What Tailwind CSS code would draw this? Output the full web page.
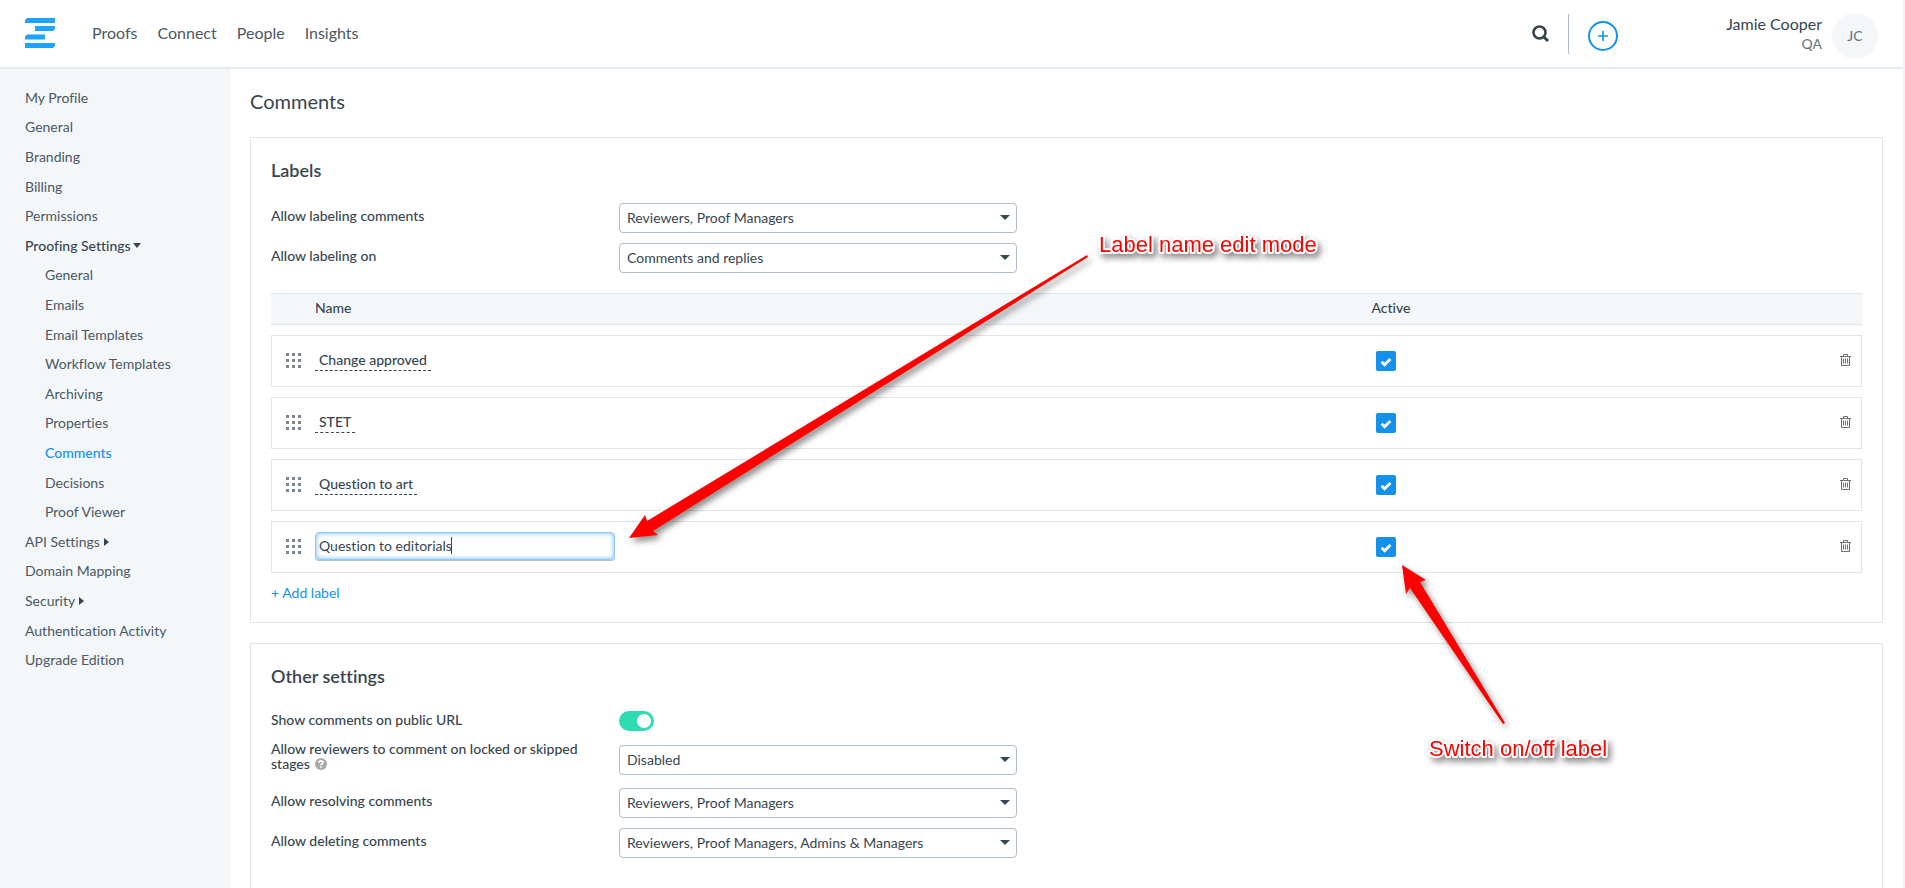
<!DOCTYPE html>
<html lang="en">

<head>
  <meta charset="UTF-8">
  <meta name="viewport" content="width=device-width, initial-scale=1.0">
  <title>Settings - Comments</title>

  <!-- Tailwind CSS -->
  <script src="https://cdn.jsdelivr.net/npm/@tailwindcss/browser@4"></script>
</head>

<body class="relative flex flex-col h-screen overflow-hidden bg-white border-r-2 border-[#f1f1f1] font-['Lato','Noto_Sans',sans-serif] [font-variant-ligatures:none] text-sm text-[#37454f]">

  <!-- Shared icons -->
  <svg class="hidden">
    <symbol id="icon-drag" viewBox="0 0 15 15">
      <path fill="currentColor" d="M0 0h3v3H0zM6 0h3v3H6zM12 0h3v3h-3zM0 6h3v3H0zM6 6h3v3H6zM12 6h3v3h-3zM0 12h3v3H0zM6 12h3v3H6zM12 12h3v3h-3z" />
    </symbol>
    <symbol id="icon-check" viewBox="0 0 12 10">
      <path fill="none" stroke="currentColor" stroke-width="2.8" d="M1.6 4.8l3 3L10.4 2" />
    </symbol>
    <symbol id="icon-trash" viewBox="0 0 11 12">
      <path fill="none" stroke="currentColor" d="M0 2.5h11M3.5 2.5v-2h4v2M1.5 2.5v9h8v-9M3.5 4.5v5M5.5 4.5v5M7.5 4.5v5" />
    </symbol>
    <symbol id="icon-caret" viewBox="0 0 10 5">
      <path fill="currentColor" d="M0 0h10L5 5z" />
    </symbol>
  </svg>

  <!-- Header begin -->
  <header class="flex shrink-0 items-center h-[69px] border-b-2 border-[#e1ebf2] px-[25px]">
    <a href="#" aria-label="Home" class="block mb-0.5">
      <svg class="w-[30px] h-[30px]" viewBox="0 0 30 30" fill="#1ea4ff">
        <path d="M2 0h28v5H0V2zM10 8h20v3l-2 2H10zM2 16.500h18v5H0v-3zM0 25h30v3l-2 2H0z" />
      </svg>
    </a>
    <nav class="flex gap-5 ml-[37px] mb-0.5 text-base text-[#4b5862]">
      <a href="#">Proofs</a>
      <a href="#">Connect</a>
      <a href="#">People</a>
      <a href="#">Insights</a>
    </nav>
    <div class="flex items-center ml-auto">
      <button type="button" aria-label="Search">
        <svg class="w-[17px] h-[17px]" viewBox="0 0 17 17" fill="none" stroke="#37454f">
          <circle cx="7.500" cy="7.500" r="6" stroke-width="2.600" />
          <path d="M11.500 11.500l4.500 4.500" stroke-width="3" />
        </svg>
      </button>
      <span class="w-px h-10 ml-[19px] bg-[#aebdc9]"></span>
      <button type="button" aria-label="Create" class="mt-1 ml-[19px]">
        <svg class="w-[30px] h-[30px]" viewBox="0 0 30 30" fill="none" stroke="#1491ea" stroke-width="2">
          <circle cx="15" cy="15" r="14" />
          <path d="M10 15h10M15 10v10" stroke-width="1.600" />
        </svg>
      </button>
      <div class="w-[100px] ml-[104px] text-right leading-5">
        <div class="text-base leading-5">Jamie Cooper</div>
        <div class="text-[#65717b]">QA</div>
      </div>
      <span class="flex items-center justify-center w-[46px] h-[46px] mt-1 ml-[10px] rounded-full bg-[#f3f7fa] text-[#65717b]">JC</span>
    </div>
  </header>
  <!-- Header End -->

  <div class="flex flex-1 min-h-0">

    <!-- Sidebar begin -->
    <aside class="w-[230px] shrink-0 bg-[#f3f7fa] pt-[14px] text-[#4b5862]">
      <ul class="grid auto-rows-fr items-center h-[592px] pl-[25px]">
        <li><a href="#">My Profile</a></li>
        <li><a href="#">General</a></li>
        <li><a href="#">Branding</a></li>
        <li><a href="#">Billing</a></li>
        <li><a href="#">Permissions</a></li>
        <li><a href="#" class="flex items-center gap-0.5 font-medium text-[#37454f]">Proofing Settings
            <svg class="w-2 h-[5px]" viewBox="0 0 8 5"><path fill="#37454f" d="M0 0h8L4 5z" /></svg></a></li>
        <li class="pl-5"><a href="#">General</a></li>
        <li class="pl-5"><a href="#">Emails</a></li>
        <li class="pl-5"><a href="#">Email Templates</a></li>
        <li class="pl-5"><a href="#">Workflow Templates</a></li>
        <li class="pl-5"><a href="#">Archiving</a></li>
        <li class="pl-5"><a href="#">Properties</a></li>
        <li class="pl-5"><a href="#" class="font-medium text-[#1491ea]">Comments</a></li>
        <li class="pl-5"><a href="#">Decisions</a></li>
        <li class="pl-5"><a href="#">Proof Viewer</a></li>
        <li><a href="#" class="flex items-center gap-1">API Settings
            <svg class="w-[5px] h-2" viewBox="0 0 5 8"><path fill="#37454f" d="M0 0l5 4-5 4z" /></svg></a></li>
        <li><a href="#">Domain Mapping</a></li>
        <li><a href="#" class="flex items-center gap-1">Security
            <svg class="w-[5px] h-2" viewBox="0 0 5 8"><path fill="#37454f" d="M0 0l5 4-5 4z" /></svg></a></li>
        <li><a href="#">Authentication Activity</a></li>
        <li><a href="#">Upgrade Edition</a></li>
      </ul>
    </aside>
    <!-- Sidebar End -->

    <!-- Content Begin -->
    <main class="flex-1 min-w-0 px-5 pt-5 overflow-hidden">
      <h1 class="text-xl leading-6 mb-6">Comments</h1>

      <!-- Labels -->
      <section class="border border-[#dee5eb] p-5">
        <h2 class="text-lg leading-6 font-semibold mb-[21px]">Labels</h2>

        <div class="grid grid-cols-[348px_398px] items-start mb-[10px]">
          <label for="labeling" class="pt-[5px] leading-[15px] font-medium">Allow labeling comments</label>
          <div class="relative">
            <select id="labeling" class="appearance-none block w-full h-[30px] border border-[#aebdc9] rounded bg-white px-[7px]">
              <option>Reviewers, Proof Managers</option>
            </select>
            <svg class="absolute right-[7px] top-3 w-[10px] h-[5px] pointer-events-none"><use href="#icon-caret" /></svg>
          </div>
        </div>
        <div class="grid grid-cols-[348px_398px] items-start mb-[10px]">
          <label for="labeling_on" class="pt-[5px] leading-[15px] font-medium">Allow labeling on</label>
          <div class="relative">
            <select id="labeling_on" class="appearance-none block w-full h-[30px] border border-[#aebdc9] rounded bg-white px-[7px]">
              <option>Comments and replies</option>
            </select>
            <svg class="absolute right-[7px] top-3 w-[10px] h-[5px] pointer-events-none"><use href="#icon-caret" /></svg>
          </div>
        </div>

        <table class="w-full table-fixed border-separate border-spacing-x-0 border-spacing-y-[10px]">
          <thead>
            <tr class="h-8 text-left">
              <th class="w-11 p-0 bg-[#f3f7fa] border-y border-[#dee5eb]"></th>
              <th class="p-0 pb-0.5 bg-[#f3f7fa] border-y border-[#dee5eb] font-medium">Name</th>
              <th class="w-[27%] p-0 pb-0.5 pl-px bg-[#f3f7fa] border-y border-[#dee5eb] font-medium">Active</th>
              <th class="w-[62px] p-0 bg-[#f3f7fa] border-y border-[#dee5eb]"></th>
            </tr>
          </thead>
          <tbody>
            <tr class="h-[52px]">
              <td class="p-0 pb-0.5 pl-[14px] border-y border-l border-[#dee5eb] text-[#7b8790]"><svg class="w-[15px] h-[15px]"><use href="#icon-drag" /></svg></td>
              <td class="p-0 pb-0.5 border-y border-[#dee5eb]"><a href="#" class="inline-block px-1 border-b border-dashed border-[#37454f] font-medium">Change approved</a></td>
              <td class="p-0 pl-[6px] border-y border-[#dee5eb]">
                <div class="relative w-5 h-5">
                  <input type="checkbox" checked aria-label="Change approved active" class="appearance-none block w-5 h-5 rounded-xs bg-[#1491ea]">
                  <svg class="absolute left-1 top-[6px] w-3 h-[10px] text-white pointer-events-none"><use href="#icon-check" /></svg>
                </div>
              </td>
              <td class="p-0 pb-0.5 pr-[10px] border-y border-r border-[#dee5eb]"><button type="button" aria-label="Delete" class="block ml-auto text-[#65717b]"><svg class="w-[11px] h-3"><use href="#icon-trash" /></svg></button></td>
            </tr>
            <tr class="h-[52px]">
              <td class="p-0 pb-0.5 pl-[14px] border-y border-l border-[#dee5eb] text-[#7b8790]"><svg class="w-[15px] h-[15px]"><use href="#icon-drag" /></svg></td>
              <td class="p-0 pb-0.5 border-y border-[#dee5eb]"><a href="#" class="inline-block px-1 border-b border-dashed border-[#37454f] font-medium">STET</a></td>
              <td class="p-0 pl-[6px] border-y border-[#dee5eb]">
                <div class="relative w-5 h-5">
                  <input type="checkbox" checked aria-label="STET active" class="appearance-none block w-5 h-5 rounded-xs bg-[#1491ea]">
                  <svg class="absolute left-1 top-[6px] w-3 h-[10px] text-white pointer-events-none"><use href="#icon-check" /></svg>
                </div>
              </td>
              <td class="p-0 pb-0.5 pr-[10px] border-y border-r border-[#dee5eb]"><button type="button" aria-label="Delete" class="block ml-auto text-[#65717b]"><svg class="w-[11px] h-3"><use href="#icon-trash" /></svg></button></td>
            </tr>
            <tr class="h-[52px]">
              <td class="p-0 pb-0.5 pl-[14px] border-y border-l border-[#dee5eb] text-[#7b8790]"><svg class="w-[15px] h-[15px]"><use href="#icon-drag" /></svg></td>
              <td class="p-0 pb-0.5 border-y border-[#dee5eb]"><a href="#" class="inline-block px-1 border-b border-dashed border-[#37454f] font-medium">Question to art</a></td>
              <td class="p-0 pl-[6px] border-y border-[#dee5eb]">
                <div class="relative w-5 h-5">
                  <input type="checkbox" checked aria-label="Question to art active" class="appearance-none block w-5 h-5 rounded-xs bg-[#1491ea]">
                  <svg class="absolute left-1 top-[6px] w-3 h-[10px] text-white pointer-events-none"><use href="#icon-check" /></svg>
                </div>
              </td>
              <td class="p-0 pb-0.5 pr-[10px] border-y border-r border-[#dee5eb]"><button type="button" aria-label="Delete" class="block ml-auto text-[#65717b]"><svg class="w-[11px] h-3"><use href="#icon-trash" /></svg></button></td>
            </tr>
            <tr class="h-[52px]">
              <td class="p-0 pb-0.5 pl-[14px] border-y border-l border-[#dee5eb] text-[#7b8790]"><svg class="w-[15px] h-[15px]"><use href="#icon-drag" /></svg></td>
              <td class="p-0 pb-0.5 border-y border-[#dee5eb]">
                <div class="relative w-[300px]">
                  <input type="text" value="Question to editorials" aria-label="Label name" class="block w-full h-7 px-[3px] pb-px border border-[#8dcaf5] rounded shadow-[inset_0_0_5px_#66b8f5,0_1px_0_#b5bfc7] outline-none">
                  <span class="absolute left-[136px] top-[5px] w-px h-[17px] bg-[#37454f]"></span>
                </div>
              </td>
              <td class="p-0 pl-[6px] border-y border-[#dee5eb]">
                <div class="relative w-5 h-5">
                  <input type="checkbox" checked aria-label="Question to editorials active" class="appearance-none block w-5 h-5 rounded-xs bg-[#1491ea]">
                  <svg class="absolute left-1 top-[6px] w-3 h-[10px] text-white pointer-events-none"><use href="#icon-check" /></svg>
                </div>
              </td>
              <td class="p-0 pb-0.5 pr-[10px] border-y border-r border-[#dee5eb]"><button type="button" aria-label="Delete" class="block ml-auto text-[#65717b]"><svg class="w-[11px] h-3"><use href="#icon-trash" /></svg></button></td>
            </tr>
          </tbody>
        </table>
        <button type="button" class="block leading-[19px] text-[#1491ea]">+ Add label</button>
      </section>

      <!-- Other settings -->
      <section class="mt-5 border border-[#dee5eb] px-5 pt-5 pb-16">
        <h2 class="text-lg leading-6 font-semibold mb-[21px]">Other settings</h2>

        <div class="grid grid-cols-[348px_398px] items-start mb-[5px]">
          <label for="public_url" class="pt-[3px] leading-[15px] font-medium">Show comments on public URL</label>
          <div class="relative w-[35px] pt-0.5">
            <input id="public_url" type="checkbox" role="switch" checked class="appearance-none block w-[35px] h-5 rounded-full bg-[#2fdcb1]">
            <span class="absolute right-[3px] top-[5px] w-[14px] h-[14px] rounded-full bg-white pointer-events-none"></span>
          </div>
        </div>
        <div class="grid grid-cols-[348px_398px] items-start mb-[13px]">
          <label for="locked" class="pt-[5px] pr-7 leading-[15px] font-medium">Allow reviewers to comment on locked or skipped stages
            <svg class="inline-block w-3 h-3 ml-0.5 mb-0.5" viewBox="0 0 12 12">
              <circle cx="6" cy="6" r="6" fill="#aaaaaa" />
              <path fill="none" stroke="#ffffff" stroke-width="1.700" d="M4 4.700C4 2.300 8 2.300 8 4.500C8 5.800 6 5.700 6 7.200M6 8.200v1.600" />
            </svg></label>
          <div class="relative mt-[9px]">
            <select id="locked" class="appearance-none block w-full h-[30px] border border-[#aebdc9] rounded bg-white px-[7px]">
              <option>Disabled</option>
            </select>
            <svg class="absolute right-[7px] top-3 w-[10px] h-[5px] pointer-events-none"><use href="#icon-caret" /></svg>
          </div>
        </div>
        <div class="grid grid-cols-[348px_398px] items-start mb-[10px]">
          <label for="resolving" class="pt-[5px] leading-[15px] font-medium">Allow resolving comments</label>
          <div class="relative">
            <select id="resolving" class="appearance-none block w-full h-[30px] border border-[#aebdc9] rounded bg-white px-[7px]">
              <option>Reviewers, Proof Managers</option>
            </select>
            <svg class="absolute right-[7px] top-3 w-[10px] h-[5px] pointer-events-none"><use href="#icon-caret" /></svg>
          </div>
        </div>
        <div class="grid grid-cols-[348px_398px] items-start mb-[10px]">
          <label for="deleting" class="pt-[5px] leading-[15px] font-medium">Allow deleting comments</label>
          <div class="relative">
            <select id="deleting" class="appearance-none block w-full h-[30px] border border-[#aebdc9] rounded bg-white px-[7px]">
              <option>Reviewers, Proof Managers, Admins &amp; Managers</option>
            </select>
            <svg class="absolute right-[7px] top-3 w-[10px] h-[5px] pointer-events-none"><use href="#icon-caret" /></svg>
          </div>
        </div>
      </section>
    </main>
    <!-- Content End -->
  </div>

  <!-- Callouts -->
  <svg class="absolute inset-0 w-full h-full pointer-events-none drop-shadow-[3px_4px_3px_rgb(0_0_0/0.45)]">
    <path fill="#ff0000" d="M629 538L645 515L647 521L1087 255L1088 257L653 531L658 535Z" />
    <path fill="#ff0000" d="M1402 565L1426 580L1420 582L1505 723L1503 724L1410 588L1406 594Z" />
    <g fill="#ff0000" stroke="#ffffff" stroke-width="4" stroke-linejoin="round" paint-order="stroke" class="font-['Liberation_Sans',sans-serif] text-[22px]">
      <text x="1099" y="252">Label name edit mode</text>
      <text x="1429" y="756">Switch on/off label</text>
    </g>
  </svg>

</body>

</html>
